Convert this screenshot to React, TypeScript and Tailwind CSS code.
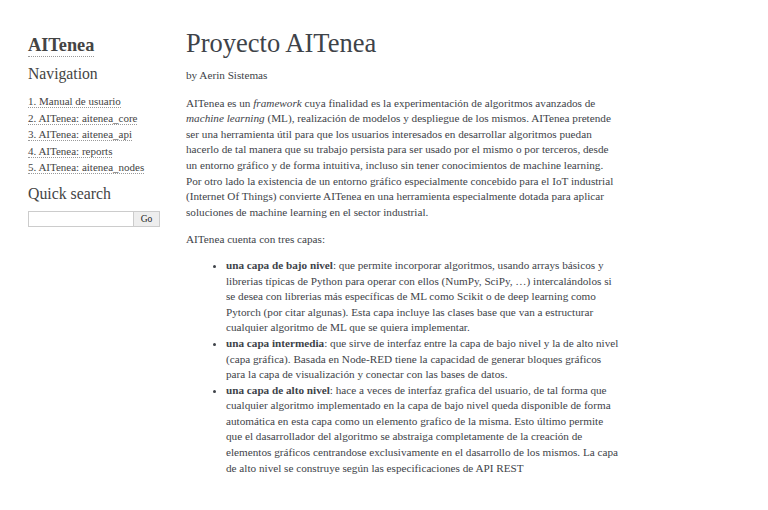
import React from "react";

const serif = { fontFamily: '"Liberation Serif", "Times New Roman", serif' };

export default function App() {
  const nav = [
    "1. Manual de usuario",
    "2. AITenea: aitenea_core",
    "3. AITenea: aitenea_api",
    "4. AITenea: reports",
    "5. AITenea: aitenea_nodes",
  ];
  return (
    <div className="w-[768px] h-[510px] bg-white text-[#3E4349] overflow-hidden" style={serif}>
      <div className="flex pl-[28px] pt-[28px]">
        <aside className="w-[132px] shrink-0">
          <h1 className="text-[18.3px] font-bold leading-[24px] text-[#444] mt-[5px]">
            <a className="border-b border-dotted border-[#999] pb-[1px]">AITenea</a>
          </h1>
          <h3 className="text-[15.7px] leading-[20px] mt-[7px] text-[#444]">Navigation</h3>
          <ul className="mt-[9px] text-[11px] leading-[16.5px] text-[#444]">
            {nav.map((n) => (
              <li key={n}>
                <a className="border-b border-dotted border-[#999]">{n}</a>
              </li>
            ))}
          </ul>
          <h3 className="text-[15.8px] leading-[20px] mt-[8px] text-[#444]">Quick search</h3>
          <div className="flex mt-[7px] h-[16px]">
            <input className="w-[105px] h-[16px] border border-[#ccc] border-r-0 bg-white outline-none" />
            <button className="w-[27px] h-[16px] border border-[#ccc] bg-[#eee] text-[9.5px] leading-[14px] text-[#222]">
              Go
            </button>
          </div>
        </aside>
        <main className="ml-[26px] w-[433px] text-[11.2px] leading-[15.6px]">
          <h1 className="text-[26.5px] leading-[30px] font-normal text-[#3E4349]">Proyecto AITenea</h1>
          <p className="mt-[10px]">by Aerin Sistemas</p>
          <p className="mt-[12px]">
            AITenea es un <em>framework</em> cuya finalidad es la experimentación de algoritmos avanzados de{" "}
            <em>machine learning</em> (ML), realización de modelos y despliegue de los mismos. AITenea pretende ser
            una herramienta útil para que los usuarios interesados en desarrollar algoritmos puedan hacerlo de tal
            manera que su trabajo persista para ser usado por el mismo o por terceros, desde un entorno gráfico y de
            forma intuitiva, incluso sin tener conocimientos de machine learning. Por otro lado la existencia de un
            entorno gráfico especialmente concebido para el IoT industrial (Internet Of Things) convierte AITenea en
            una herramienta especialmente dotada para aplicar soluciones de machine learning en el sector industrial.
          </p>
          <p className="mt-[12px]">AITenea cuenta con tres capas:</p>
          <ul className="mt-[10px] ml-[40px] list-disc w-[394px]">
            <li>
              <strong>una capa de bajo nivel</strong>: que permite incorporar algoritmos, usando arrays básicos y
              librerias típicas de Python para operar con ellos (NumPy, SciPy, …) intercalándolos si se desea con
              librerias más específicas de ML como Scikit o de deep learning como Pytorch (por citar algunas). Esta
              capa incluye las clases base que van a estructurar cualquier algoritmo de ML que se quiera implementar.
            </li>
            <li>
              <strong>una capa intermedia</strong>: que sirve de interfaz entre la capa de bajo nivel y la de alto
              nivel (capa gráfica). Basada en Node-RED tiene la capacidad de generar bloques gráficos para la capa de
              visualización y conectar con las bases de datos.
            </li>
            <li>
              <strong>una capa de alto nivel</strong>: hace a veces de interfaz grafica del usuario, de tal forma que
              cualquier algoritmo implementado en la capa de bajo nivel queda disponible de forma automática en esta
              capa como un elemento grafico de la misma. Esto último permite que el dasarrollador del algoritmo se
              abstraiga completamente de la creación de elementos gráficos centrandose exclusivamente en el
              dasarrollo de los mismos. La capa de alto nivel se construye según las especificaciones de API REST
            </li>
          </ul>
        </main>
      </div>
    </div>
  );
}
